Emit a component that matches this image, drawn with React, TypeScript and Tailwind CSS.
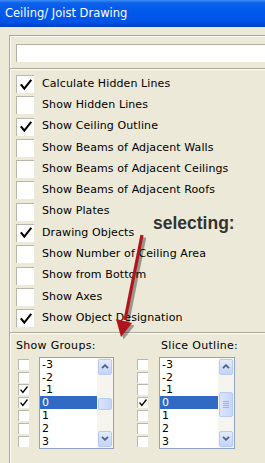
import React from 'react';

const options: [string, boolean][] = [
  ['Calculate Hidden Lines', true],
  ['Show Hidden Lines', false],
  ['Show Ceiling Outline', true],
  ['Show Beams of Adjacent Walls', false],
  ['Show Beams of Adjacent Ceilings', false],
  ['Show Beams of Adjacent Roofs', false],
  ['Show Plates', false],
  ['Drawing Objects', true],
  ['Show Number of Ceiling Area', false],
  ['Show from Bottom', false],
  ['Show Axes', false],
  ['Show Object Designation', true],
];

const levels = ['-3', '-2', '-1', '0', '1', '2', '3'];

function Tick({ size }: { size: number }) {
  return (
    <svg width={size} height={size} viewBox="0 0 12 12">
      <path d="M1.5 6.2 L4.3 9.6 L10.6 1.6" fill="none" stroke="#000" strokeWidth="2.1" strokeLinecap="square" />
    </svg>
  );
}

function BigBox({ on }: { on: boolean }) {
  return (
    <div className="w-[18px] h-[18px] bg-white border-t border-l border-[#b9b7ab] flex items-center justify-center shrink-0">
      {on && <Tick size={12} />}
    </div>
  );
}

function SmallBox({ on }: { on: boolean }) {
  return (
    <div className="h-[12.9px] flex items-center">
      <div className="w-[11px] h-[11px] bg-white border-t border-l border-[#b9b7ab] flex items-center justify-center">
        {on && <Tick size={8} />}
      </div>
    </div>
  );
}

function Arrow({ up }: { up: boolean }) {
  return (
    <svg width="8" height="5" viewBox="0 0 8 5">
      <path d={up ? 'M1 4.2 L4 1.2 L7 4.2' : 'M1 0.8 L4 3.8 L7 0.8'} fill="none" stroke="#4d6185" strokeWidth="1.8" />
    </svg>
  );
}

function ScrollBtn({ up }: { up: boolean }) {
  return (
    <div className="h-[16px] rounded-[2px] border border-[#b8c9f2] bg-[linear-gradient(to_bottom,#e3ebfd,#c3d4f8)] flex items-center justify-center">
      <Arrow up={up} />
    </div>
  );
}

function ListBox({ width, thumbTop, thumbH, grip }: { width: string; thumbTop: string; thumbH: string; grip: boolean }) {
  return (
    <div className={`${width} border border-[#8ea3c0] bg-white flex`}>
      <div className="flex-1 flex flex-col">
        {levels.map((l) => (
          <div
            key={l}
            className={`h-[12.9px] pl-[2px] text-[11px] leading-[13px] ${l === '0' ? 'bg-[#316ac5] text-white' : 'text-black'}`}
          >
            {l}
          </div>
        ))}
      </div>
      <div className="w-[16px] bg-[#f5f4ef] flex flex-col p-px">
        <ScrollBtn up />
        <div className="flex-1">
          <div
            className={`${thumbTop} ${thumbH} rounded-[2px] border border-[#b8c9f2] bg-[linear-gradient(to_right,#dbe5fd,#c6d6fa)] flex flex-col items-center justify-center gap-px`}
          >
            {grip && (
              <>
                <div className="w-[6px] h-px bg-[#9fb3e6]" />
                <div className="w-[6px] h-px bg-[#9fb3e6]" />
                <div className="w-[6px] h-px bg-[#9fb3e6]" />
                <div className="w-[6px] h-px bg-[#9fb3e6]" />
              </>
            )}
          </div>
        </div>
        <ScrollBtn up={false} />
      </div>
    </div>
  );
}

export default function App() {
  const left = [false, false, true, true, false, false, false];
  const right = [false, false, false, true, false, false, false];

  return (
    <div className="relative w-[265px] h-[463px] overflow-hidden bg-[#ece9d8] font-['DejaVu_Sans',sans-serif] text-black">
      {/* title bar */}
      <div className="h-[27px] pl-[5px] flex items-center text-white text-[11.5px] bg-[linear-gradient(to_bottom,#3d8df6_0px,#0b61ea_3px,#0058ee_45%,#0054e6_80%,#0042c6_100%)]">
        Ceiling/ Joist Drawing
      </div>

      <div className="pl-[9px] pt-[8px]">
        {/* input frame */}
        <div className="border-t border-l border-[#aca899] shadow-[inset_1px_1px_0_#fff] pl-[6px] pt-[8px] pb-[6px]">
          <div className="h-[18px] bg-white border-t border-l border-[#b3b1a5]" />
        </div>

        {/* options */}
        <div className="border-t border-l border-[#aca899] shadow-[inset_1px_1px_0_#fff] pl-[6px] pt-[4.5px] pb-[3px]">
          {options.map(([label, on]) => (
            <div key={label} className="h-[21.27px] flex items-center gap-[8px]">
              <BigBox on={on} />
              <span className="text-[11px] tracking-[0.1px] whitespace-nowrap">{label}</span>
            </div>
          ))}
        </div>

        {/* groups */}
        <div className="h-[140px] border-t border-l border-[#aca899] shadow-[inset_1px_1px_0_#fff] pl-[6px] pt-[6px] flex gap-[23px]">
          <div className="flex flex-col">
            <div className="text-[11px] leading-[13px] tracking-[0.3px]">Show Groups:</div>
            <div className="mt-[5px] pl-[2px] flex gap-[10px]">
              <div className="pt-px flex flex-col">
                {left.map((on, i) => (
                  <SmallBox key={i} on={on} />
                ))}
              </div>
              <ListBox width="w-[75px]" thumbTop="mt-[23px]" thumbH="h-[12px]" grip={false} />
            </div>
          </div>
          <div className="flex flex-col">
            <div className="pl-[24px] text-[11px] leading-[13px] tracking-[0.3px]">Slice Outline:</div>
            <div className="mt-[5px] flex gap-[11px]">
              <div className="pt-px flex flex-col">
                {right.map((on, i) => (
                  <SmallBox key={i} on={on} />
                ))}
              </div>
              <ListBox width="w-[76px]" thumbTop="mt-[17px]" thumbH="h-[25px]" grip />
            </div>
          </div>
        </div>
      </div>

      {/* annotation */}
      <div className="absolute left-[153px] top-[214.5px] text-[17.5px] leading-none font-bold text-[#333] font-['Liberation_Sans',Arial,sans-serif]">
        selecting:
      </div>
      <svg className="absolute left-0 top-0 pointer-events-none" width="265" height="463">
        <g opacity="0.35" transform="translate(2.5 2.5)">
          <line x1="142" y1="235" x2="125" y2="320" stroke="#000" strokeWidth="3.5" />
          <polygon points="116,319 132,323 121,337" fill="#000" />
        </g>
        <line x1="142" y1="235" x2="125" y2="320" stroke="#b0141c" strokeWidth="3.2" />
        <polygon points="116,319 132,323 121,337" fill="#b0141c" />
      </svg>
    </div>
  );
}
